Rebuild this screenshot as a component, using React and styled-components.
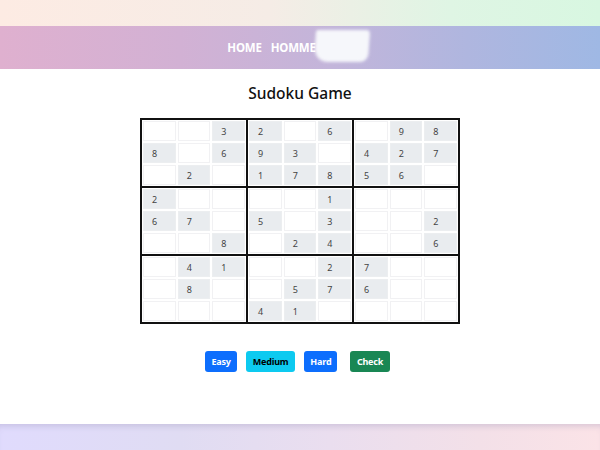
import React from "react";
import styled, { createGlobalStyle } from "styled-components";

const Global = createGlobalStyle`
  html, body { margin: 0; padding: 0; height: 100%; background: #fff; }
  body { font-family: "Noto Sans", "Open Sans", sans-serif; }
  #root { height: 100%; }
`;

const Page = styled.div`
  height: 450px;
  display: flex;
  flex-direction: column;
  overflow: hidden;
`;

const TopBand = styled.div`
  height: 26px;
  flex: none;
  background: linear-gradient(90deg, #fdebe3 0%, #f5ece6 45%, #dff5e4 75%, #d8f7e1 100%);
`;

const Header = styled.header`
  height: 43px;
  flex: none;
  background: linear-gradient(90deg, #dfb0cf 0%, #d2b1d4 30%, #c3b5da 55%, #afb6df 78%, #9fb8e4 100%);
  display: flex;
  align-items: center;
  justify-content: center;
  padding-right: 4px;
`;

const Nav = styled.nav`
  display: flex;
  align-items: center;
  gap: 9px;
`;

const NavLink = styled.a`
  color: #fff;
  font-weight: 700;
  font-size: 11.5px;
  letter-spacing: -0.2px;
  text-decoration: none;
  position: relative;
  z-index: 1;
`;

const Glow = styled.span`
  display: block;
  width: 54px;
  height: 32px;
  margin-left: -10px;
  margin-top: -3px;
  background: #f6f7fb;
  border-radius: 2px 4px 8px 14px;
  filter: blur(1.5px);
  transform: skewX(-4deg);
`;

const Main = styled.main`
  flex: 1;
  display: flex;
  flex-direction: column;
  align-items: center;
  padding-top: 12px;
`;

const Title = styled.h1`
  margin: 0;
  font-size: 15.5px;
  line-height: 24px;
  font-weight: 500;
  color: #111;
`;

const Board = styled.div`
  margin-top: 13px;
  display: grid;
  grid-template-columns: repeat(3, 104px);
  gap: 2px;
  background: #111;
  border: 2px solid #111;
`;

const Box = styled.div`
  background: #fff;
  padding: 1px;
  display: grid;
  grid-template-columns: repeat(3, 1fr);
  grid-auto-rows: 20px;
  gap: 2px;
`;

const Cell = styled.div`
  box-sizing: border-box;
  border: 1px solid ${(p) => (p.$filled ? "#eceef0" : "#f1f1f3")};
  background: ${(p) => (p.$filled ? "#e9ecef" : "#fff")};
  color: #444;
  font-size: 9px;
  display: flex;
  align-items: center;
  padding-left: 8px;
`;

const Buttons = styled.div`
  margin-top: 27px;
  padding-left: 4px;
  display: flex;
  align-items: center;
`;

const Btn = styled.button`
  font-family: inherit;
  font-size: 9px;
  font-weight: 700;
  letter-spacing: -0.2px;
  height: 21px;
  padding: 0 ${(p) => p.$px || 6}px;
  border: none;
  border-radius: 3px;
  margin-right: ${(p) => p.$mr || 9}px;
  background: ${(p) => p.$bg};
  color: ${(p) => p.$fg};
  cursor: pointer;
`;

const BottomBand = styled.div`
  height: 26px;
  flex: none;
  background: linear-gradient(90deg, #e0dbfd 0%, #e0dcf3 30%, #eadeef 55%, #f3e0e8 80%, #fbe3e7 100%);
  box-shadow: inset 0 6px 6px -4px rgba(150, 140, 180, 0.35);
`;

const grid = [
  "003206098",
  "806930427",
  "020178560",
  "200001000",
  "670503002",
  "008024006",
  "041002700",
  "080057600",
  "000410000",
];

function boxCells(b) {
  const br = Math.floor(b / 3) * 3;
  const bc = (b % 3) * 3;
  const out = [];
  for (let r = 0; r < 3; r++)
    for (let c = 0; c < 3; c++) out.push(grid[br + r][bc + c]);
  return out;
}

export default function App() {
  return (
    <Page>
      <Global />
      <TopBand />
      <Header>
        <Nav>
          <NavLink href="#">HOME</NavLink>
          <NavLink href="#">HOMME</NavLink>
          <Glow />
        </Nav>
      </Header>
      <Main>
        <Title>Sudoku Game</Title>
        <Board>
          {Array.from({ length: 9 }, (_, b) => (
            <Box key={b}>
              {boxCells(b).map((v, i) => (
                <Cell key={i} $filled={v !== "0"}>
                  {v !== "0" ? v : ""}
                </Cell>
              ))}
            </Box>
          ))}
        </Board>
        <Buttons>
          <Btn $bg="#0d6efd" $fg="#fff" $px={6}>Easy</Btn>
          <Btn $bg="#0dcaf0" $fg="#000" $px={7}>Medium</Btn>
          <Btn $bg="#0d6efd" $fg="#fff" $px={6} $mr={13}>Hard</Btn>
          <Btn $bg="#198754" $fg="#fff" $px={6.5} $mr={0}>Check</Btn>
        </Buttons>
      </Main>
      <BottomBand />
    </Page>
  );
}
